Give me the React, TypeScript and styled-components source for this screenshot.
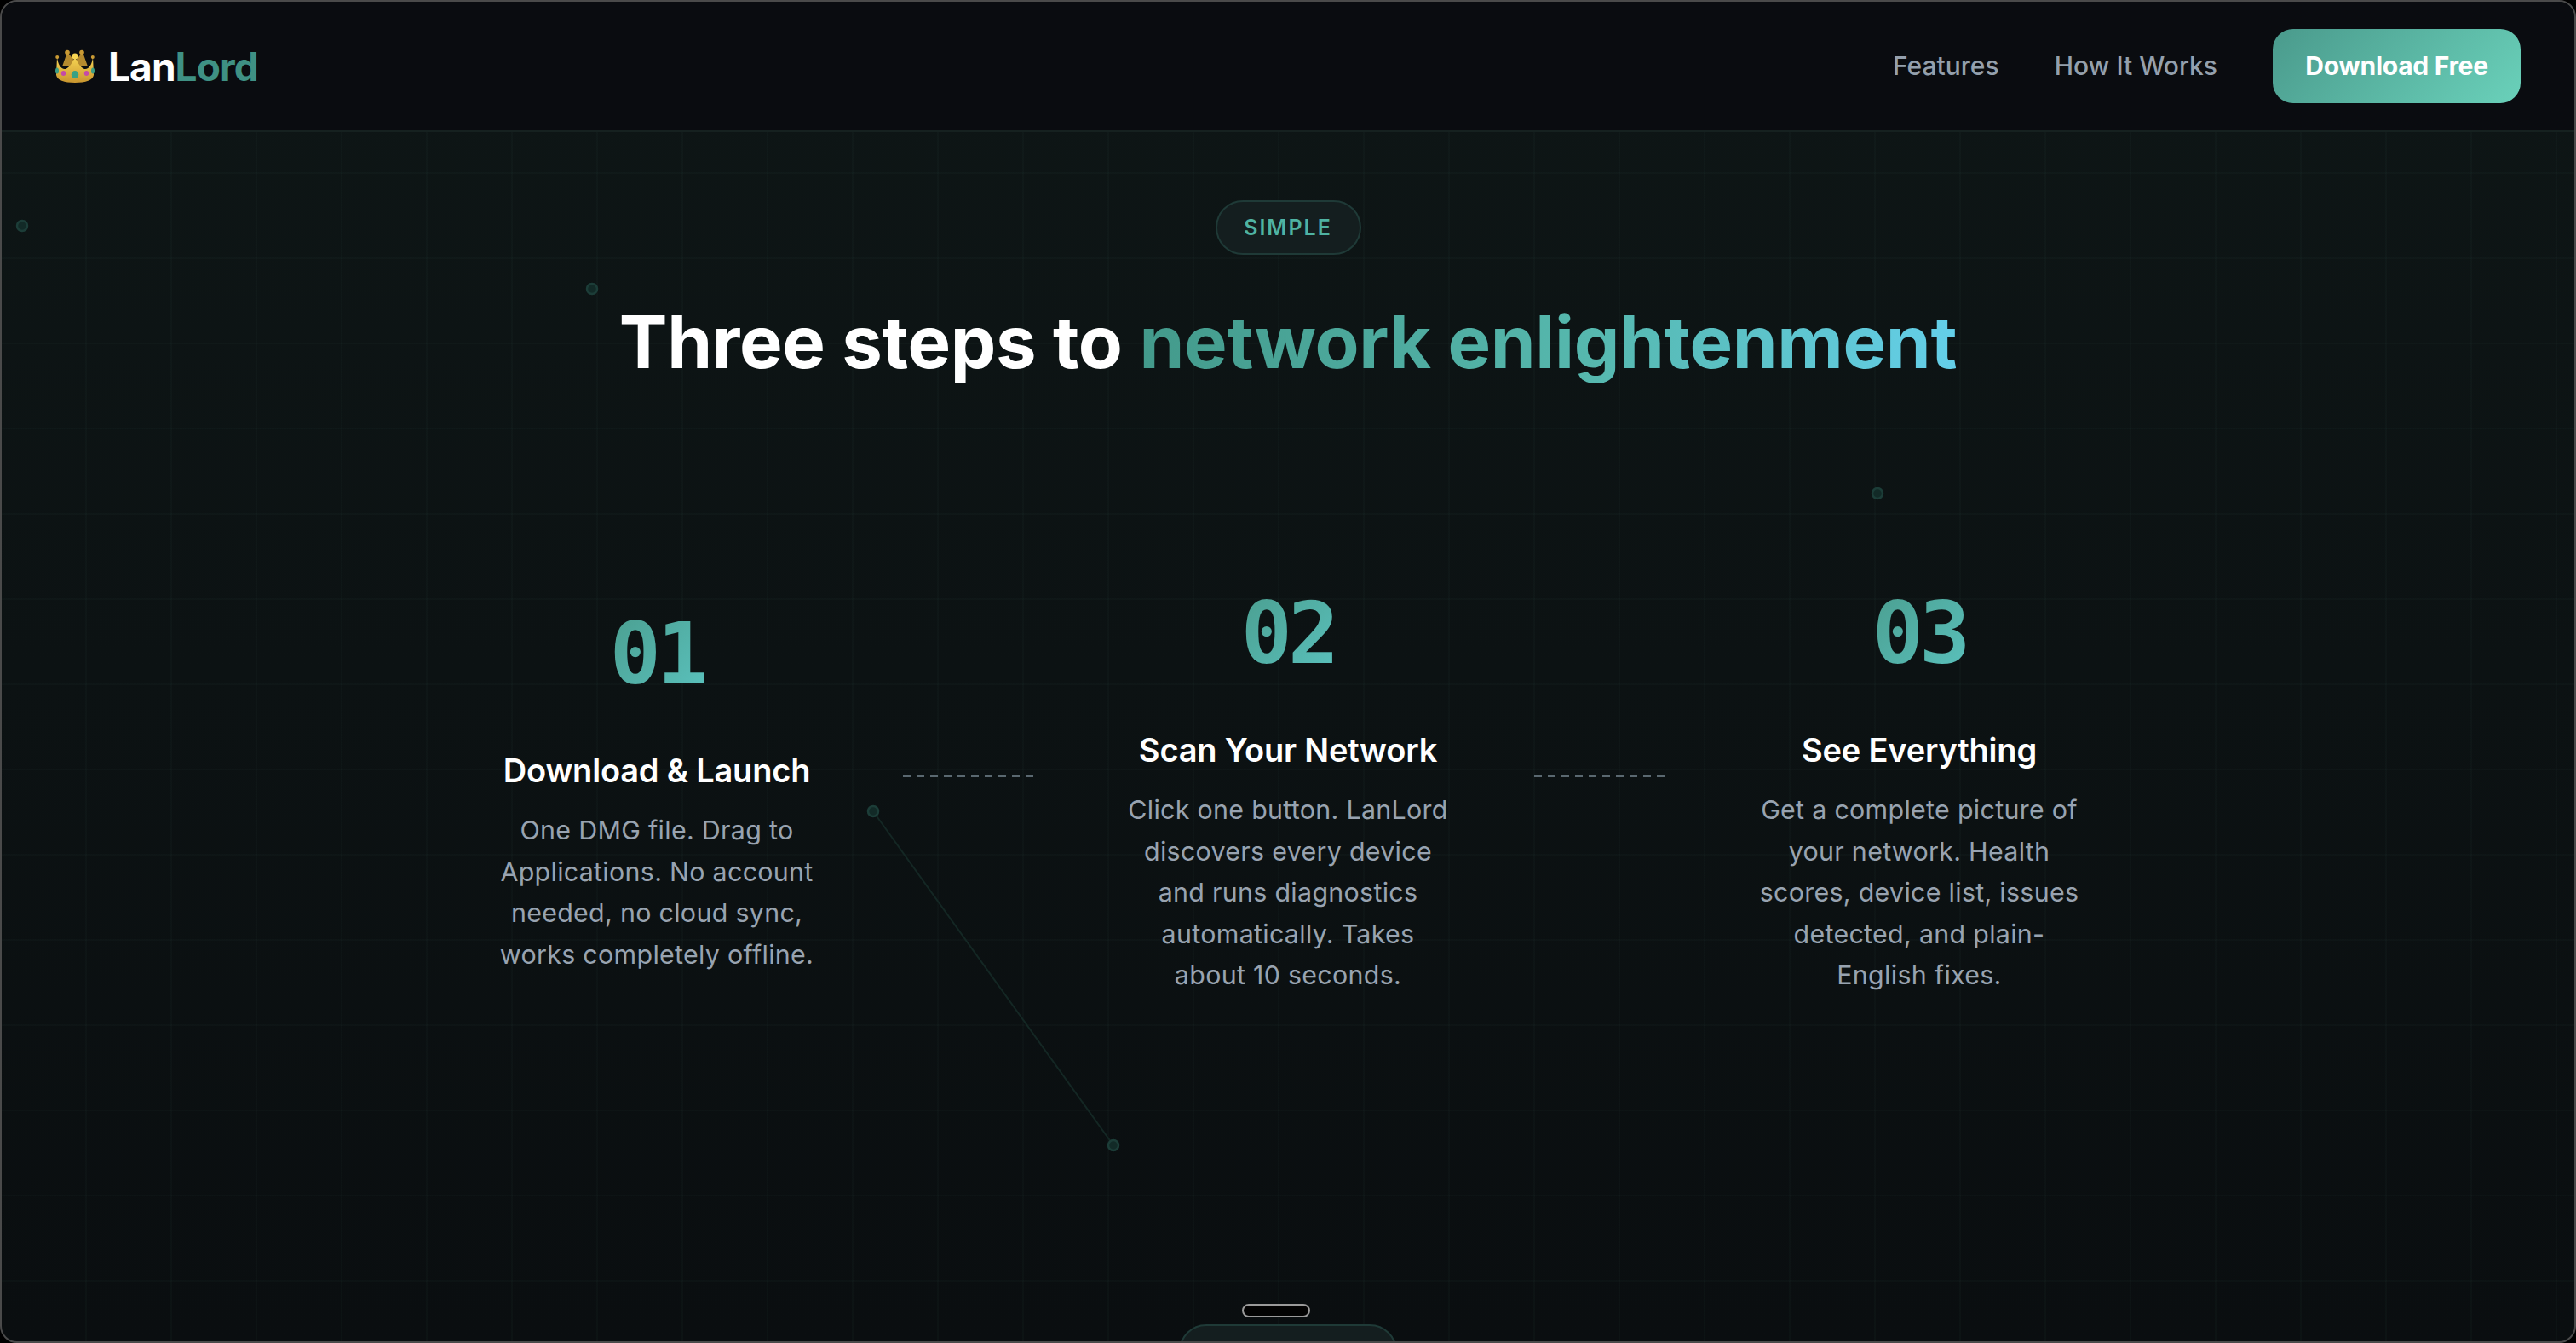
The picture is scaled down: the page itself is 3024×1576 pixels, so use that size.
import React from 'react';
import styled, { createGlobalStyle } from 'styled-components';

const GlobalStyle = createGlobalStyle`
  html, body { margin: 0; padding: 0; background: #000; }
  * { box-sizing: border-box; }
`;

const sans = `Inter, "Noto Sans", sans-serif`;

const steps = [
  {
    num: '01',
    title: 'Download & Launch',
    lines: ['One DMG file. Drag to', 'Applications. No account', 'needed, no cloud sync,', 'works completely offline.'],
    drop: 24,
  },
  {
    num: '02',
    title: 'Scan Your Network',
    lines: ['Click one button. LanLord', 'discovers every device', 'and runs diagnostics', 'automatically. Takes', 'about 10 seconds.'],
    drop: 0,
  },
  {
    num: '03',
    title: 'See Everything',
    lines: ['Get a complete picture of', 'your network. Health', 'scores, device list, issues', 'detected, and plain-', 'English fixes.'],
    drop: 0,
  },
];

const Crown = () => (
  <CrownIcon viewBox="0 0 46 40">
    <defs>
      <linearGradient id="crownBody" x1="0" y1="0" x2="0" y2="1">
        <stop offset="0" stopColor="#f7d553" />
        <stop offset="1" stopColor="#c9962f" />
      </linearGradient>
    </defs>
    <path d="M14 3 L23 14 L32 3 L38 20 L8 20 Z" fill="#b58a2e" />
    <circle cx="14" cy="3.5" r="2.8" fill="#c99a34" />
    <circle cx="31" cy="3.5" r="2.8" fill="#c99a34" />
    <circle cx="2.2" cy="9" r="2" fill="#c99a34" />
    <circle cx="43.8" cy="9" r="2" fill="#c99a34" />
    <circle cx="23" cy="8" r="3.6" fill="#f7d553" />
    <path
      d="M2 9 C3 18 7 24 12 23 C17 21 20 15 23 9 C26 15 29 21 34 23 C39 24 43 18 44 9 L45 30 C44 36 36 39 23 39 C10 39 2 36 1 30 Z"
      fill="url(#crownBody)"
    />
    <ellipse cx="23" cy="29.5" rx="4.2" ry="4.6" fill="#39a184" />
    <ellipse cx="9.5" cy="28" rx="2.7" ry="3" fill="#c44aa8" />
    <ellipse cx="36.5" cy="28" rx="2.7" ry="3" fill="#c44aa8" />
    <ellipse cx="2" cy="25" rx="2" ry="3.6" fill="#3c9d83" />
    <ellipse cx="44" cy="25" rx="2" ry="3.6" fill="#3c9d83" />
  </CrownIcon>
);

const App = () => {
  return (
    <Frame>
      <GlobalStyle />
      <NetworkBackdrop viewBox="0 0 3024 1576">
        <line x1="1025" y1="952" x2="1307" y2="1344" stroke="#142724" strokeWidth="2" />
        {[
          [26, 265],
          [695, 339],
          [2204, 579],
          [1025, 952],
          [1307, 1344],
        ].map(([cx, cy]) => (
          <circle key={cx} cx={cx} cy={cy} r="6" fill="#122a27" stroke="#1c3d38" strokeWidth="2.5" />
        ))}
      </NetworkBackdrop>

      <Header>
        <Logo>
          <Crown />
          <LogoText>
            Lan<LogoAccent>Lord</LogoAccent>
          </LogoText>
        </Logo>
        <Nav>
          <NavLink>Features</NavLink>
          <NavLink>How It Works</NavLink>
          <DownloadButton>Download Free</DownloadButton>
        </Nav>
      </Header>

      <Section>
        <Badge>SIMPLE</Badge>
        <Heading>
          Three steps to <HeadingAccent>network enlightenment</HeadingAccent>
        </Heading>

        <StepsRow>
          {steps.map((step, i) => (
            <React.Fragment key={step.num}>
              <Step $drop={step.drop}>
                <StepNumber>{step.num}</StepNumber>
                <StepTitle>{step.title}</StepTitle>
                <StepText>
                  {step.lines.map((line) => (
                    <span key={line}>{line}</span>
                  ))}
                </StepText>
              </Step>
              {i < steps.length - 1 && <Connector />}
            </React.Fragment>
          ))}
        </StepsRow>

        <NextSection>
          <Notch />
          <NextBadge />
        </NextSection>
      </Section>
    </Frame>
  );
};

const Frame = styled.div`
  position: relative;
  width: 3024px;
  height: 1576px;
  overflow: hidden;
  display: flex;
  flex-direction: column;
  border: 2px solid #4a4a4a;
  border-radius: 20px;
  background-color: #0c1214;
  background-image:
    linear-gradient(rgba(78, 157, 142, 0.035) 2px, transparent 2px),
    linear-gradient(90deg, rgba(78, 157, 142, 0.035) 2px, transparent 2px),
    linear-gradient(180deg, #0e1616 0%, #0a0e10 100%);
  background-size: 100px 100px, 100px 100px, 100% 100%;
  background-position: 0 0, -2px 0, 0 0;
`;

const NetworkBackdrop = styled.svg`
  position: absolute;
  left: -2px;
  top: -2px;
  width: 3024px;
  height: 1576px;
`;

const Header = styled.header`
  position: relative;
  flex: none;
  height: 153px;
  display: flex;
  align-items: center;
  justify-content: space-between;
  padding: 0 63px;
  background: #0a0c10;
  border-bottom: 2px solid #162120;
`;

const Logo = styled.div`
  display: flex;
  align-items: center;
  gap: 16px;
`;

const CrownIcon = styled.svg`
  width: 46px;
  height: 40px;
`;

const LogoText = styled.div`
  font-family: ${sans};
  font-weight: 700;
  font-size: 46px;
  letter-spacing: -0.02em;
  color: #fff;
`;

const LogoAccent = styled.span`
  color: #3f9184;
`;

const Nav = styled.nav`
  display: flex;
  align-items: center;
  gap: 65px;
`;

const NavLink = styled.a`
  margin-bottom: 2px;
  font-family: ${sans};
  font-weight: 500;
  font-size: 30px;
  color: #94a0ad;
`;

const DownloadButton = styled.button`
  width: 291px;
  height: 87px;
  padding: 0 0 2px;
  border: 0;
  border-radius: 24px;
  font-family: ${sans};
  font-weight: 700;
  font-size: 30px;
  letter-spacing: -0.01em;
  color: #fff;
  background: linear-gradient(135deg, #4a9a8c 0%, #6ad1ba 100%);
`;

const Section = styled.section`
  position: relative;
  flex: 1;
  display: flex;
  flex-direction: column;
  align-items: center;
  padding-top: 80px;
`;

const Badge = styled.div`
  height: 64px;
  width: 171px;
  display: flex;
  align-items: center;
  justify-content: center;
  border: 2px solid #1f3a37;
  border-radius: 32px;
  background: #141e1f;
  font-family: ${sans};
  font-weight: 600;
  font-size: 25px;
  letter-spacing: 0.08em;
  color: #4fb3a2;
`;

const Heading = styled.h2`
  margin: 50px 0 0;
  font-family: ${sans};
  font-weight: 700;
  font-size: 85px;
  line-height: 106px;
  letter-spacing: -0.36px;
  color: #fff;
`;

const HeadingAccent = styled.span`
  background: linear-gradient(90deg, #439a8b 0%, #56b8ae 55%, #64cfe9 100%);
  -webkit-background-clip: text;
  background-clip: text;
  color: transparent;
`;

const StepsRow = styled.div`
  display: flex;
  align-items: flex-start;
  margin-top: 231px;
`;

const Step = styled.div<{ $drop: number }>`
  width: 400px;
  display: flex;
  flex-direction: column;
  align-items: center;
  text-align: center;
  padding-top: ${({ $drop }) => $drop}px;
`;

const StepNumber = styled.div`
  font-family: 'DejaVu Sans Mono', 'Liberation Mono', monospace;
  font-weight: 700;
  font-size: 100px;
  line-height: 116px;
  letter-spacing: -0.05em;
  background: linear-gradient(135deg, #4a9d8e 0%, #5bc3bf 100%);
  -webkit-background-clip: text;
  background-clip: text;
  color: transparent;
`;

const StepTitle = styled.h3`
  margin: 54px 0 0;
  font-family: ${sans};
  font-weight: 600;
  font-size: 38px;
  line-height: 48px;
  letter-spacing: -0.005em;
  color: #fff;
`;

const StepText = styled.p`
  margin: 22px 0 0;
  display: flex;
  flex-direction: column;
  font-family: ${sans};
  font-weight: 400;
  font-size: 30.4px;
  line-height: 48.6px;
  letter-spacing: 0.3px;
  color: #98a3b0;
  white-space: nowrap;
`;

const Connector = styled.div`
  flex: none;
  width: 154px;
  height: 2px;
  margin: 224px 98px 0 89px;
  background: repeating-linear-gradient(90deg, #5a6870 0 9px, transparent 9px 16px);
`;

const NextSection = styled.div`
  position: absolute;
  left: 0;
  right: 0;
  bottom: 0;
  display: flex;
  flex-direction: column;
  align-items: center;
`;

const Notch = styled.div`
  width: 80px;
  height: 16px;
  margin-right: 29px;
  border: 2px solid #9a9a9a;
  border-radius: 8px;
  background: #030303;
`;

const NextBadge = styled.div`
  width: 256px;
  height: 40px;
  margin-top: 8px;
  margin-bottom: -20px;
  border: 2px solid #1f3a37;
  border-radius: 32px 32px 0 0;
  background: #141e1f;
`;

export default App;
